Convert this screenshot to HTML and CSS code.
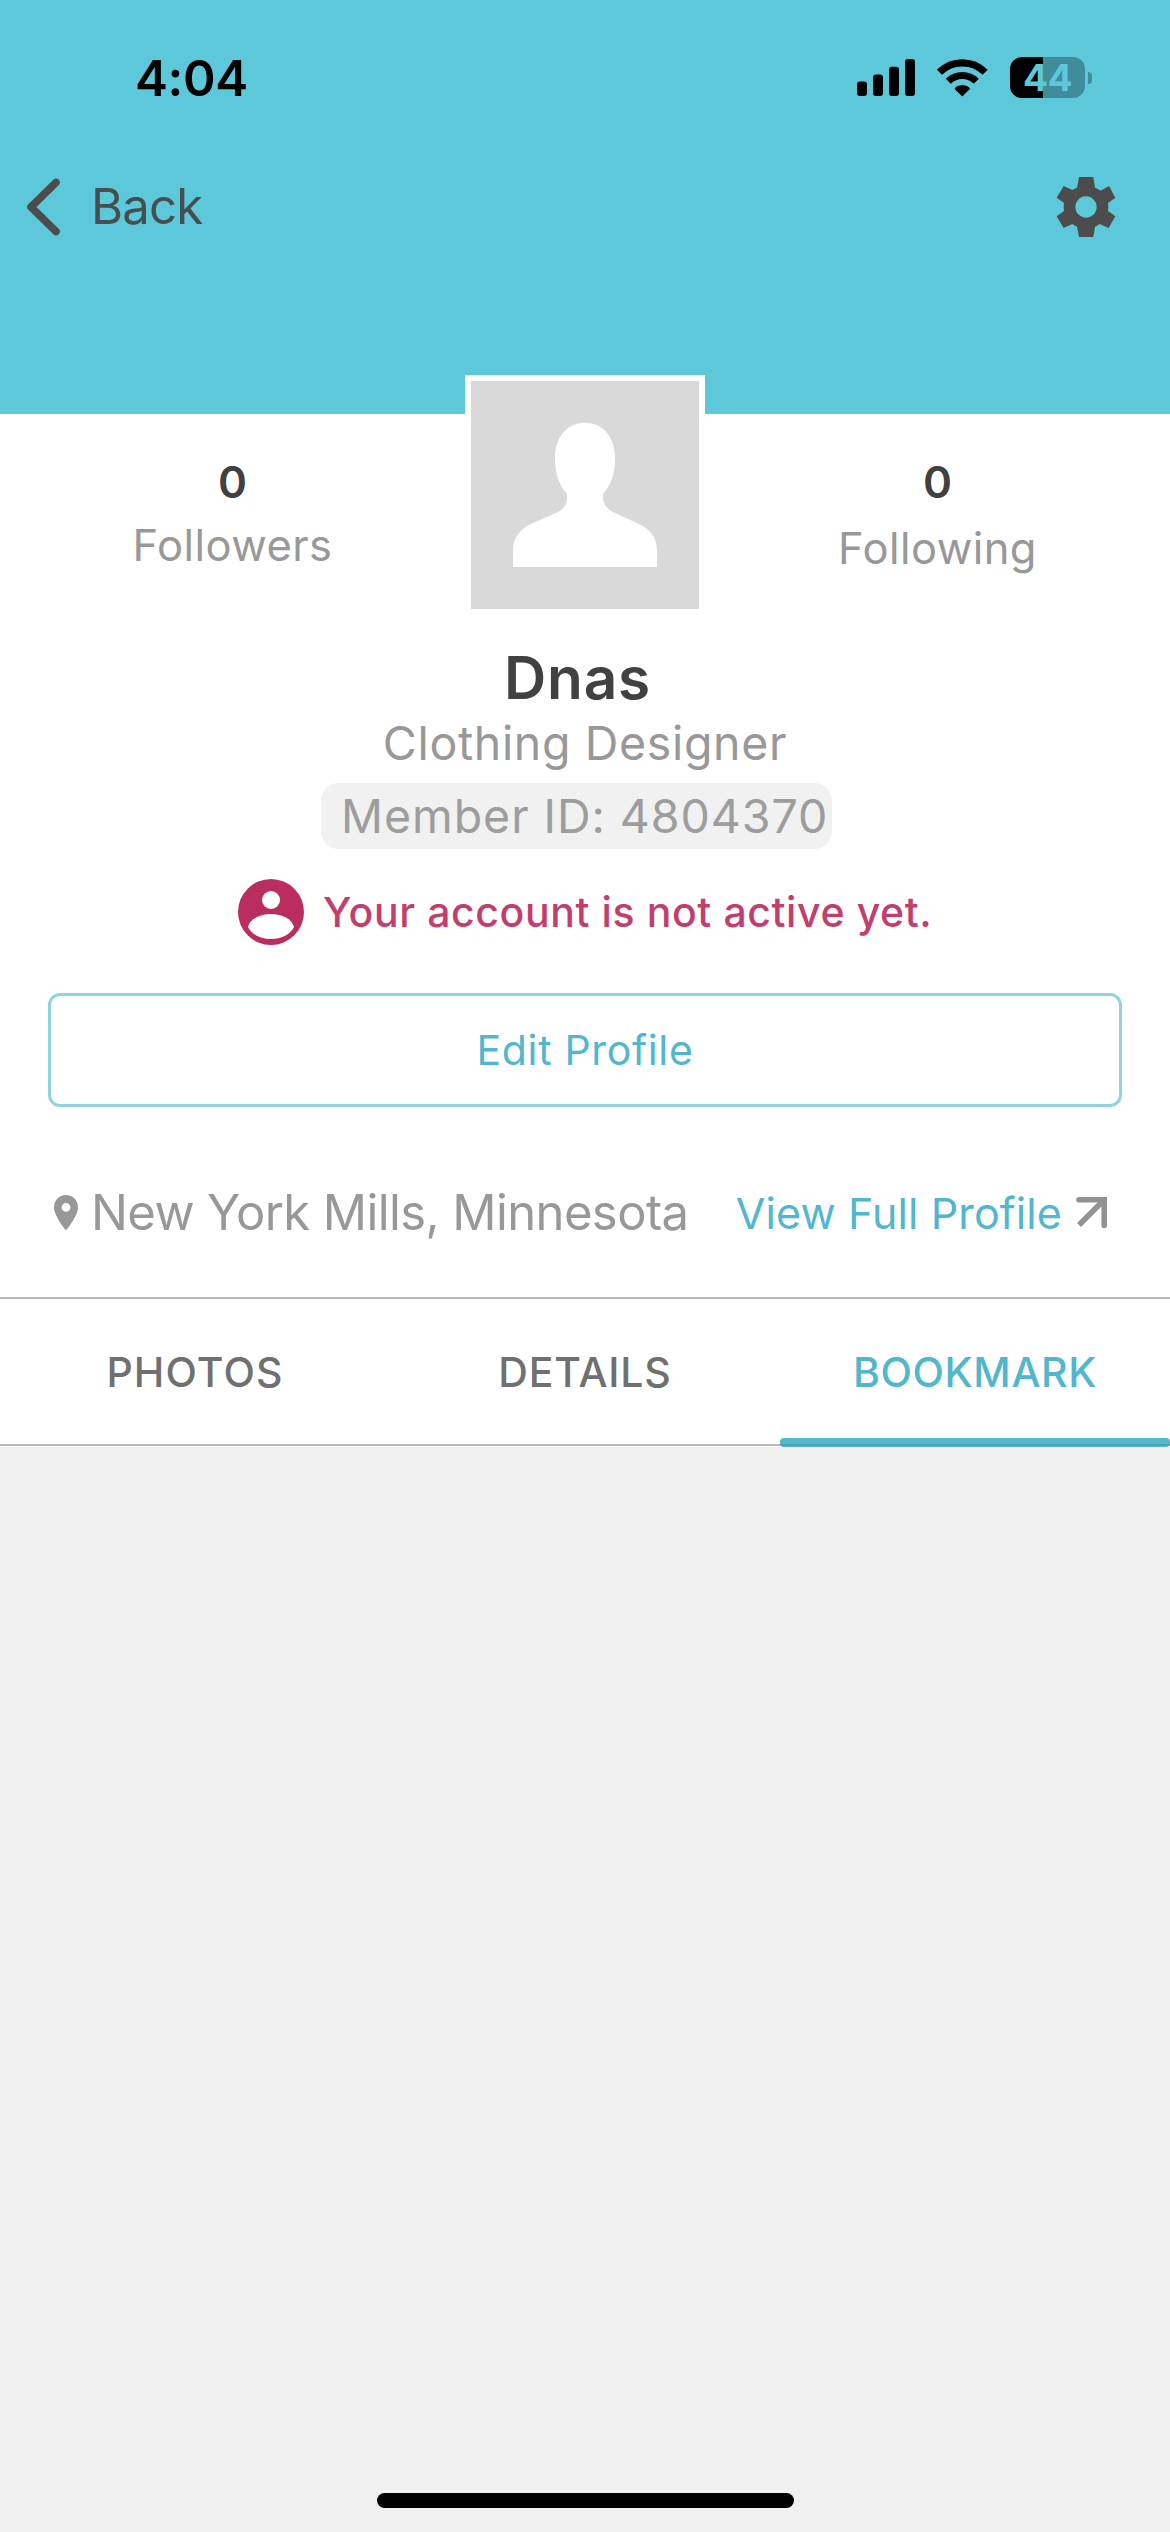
FILE: index.html
```html
<!DOCTYPE html>
<html lang="en">
<head>
<meta charset="utf-8">
<title>Profile</title>
<link rel="stylesheet" href="styles.css">
</head>
<body>
<div class="screen">
  <header class="header">
    <div class="status">
      <span class="time">4:04</span>
      <div class="status-icons">
        <svg class="signal" width="58" height="37" viewBox="0 0 58 37"><rect y="22.5" width="10" height="14.5" rx="3"/><rect x="16" y="15.5" width="10" height="21.5" rx="3"/><rect x="32" y="7.8" width="10" height="29.2" rx="3"/><rect x="48" width="10" height="37" rx="3"/></svg>
        <svg class="wifi" width="51" height="38" viewBox="0 0 51 38"><path d="M2.5 13.2A32.3 32.3 0 0 1 48.1 13.2M11.3 22.3A19.8 19.8 0 0 1 39.3 22.3" fill="none" stroke="#000" stroke-width="7.2"/><path d="M18 30.2Q17.4 29.4 18.2 28.7C22 25.2 28.6 25.2 32.4 28.7Q33.2 29.4 32.6 30.2L25.8 37Q25.3 37.4 24.8 37Z"/></svg>
        <div class="battery"><span class="level">44</span></div>
        <span class="battery-tip"></span>
      </div>
    </div>
    <nav class="nav">
      <a class="back">
        <svg width="36" height="58" viewBox="0 0 36 58"><path d="M30 4.5L5 29L30 53.5" fill="none" stroke="#4d4c4d" stroke-width="7.6" stroke-linecap="round" stroke-linejoin="round"/></svg>
        <span class="back-label">Back</span>
      </a>
      <svg width="60" height="60" viewBox="708 438 180 180"><path fill="#4d4c4d" fill-rule="evenodd" d="M777 438H820L825 470Q834 473 842 479L867 465L886 500L864 516Q866 528 864 540L886 556L866 591L839 579Q832 584 825 587L820 618H777L771 587Q764 584 757 579L731 591L710 556L732 540Q730 528 732 516L710 500L731 465L757 477Q764 473 771 470ZM798 496A32 32 0 1 0 798 560A32 32 0 1 0 798 496Z"/></svg>
    </nav>
  </header>

  <main class="profile">
    <section class="stats">
      <div class="stat">
        <span class="count">0</span>
        <span class="stat-label">Followers</span>
      </div>
      <div class="avatar">
        <svg width="228" height="228" viewBox="0 0 228 228"><path fill="#fff" d="M114 41.7C132 41.7 144 56 144 77C144 93 140 104 132 113V117C132 123 136 128 142 131L168 143C179 148 186 157 186 169V186H42V169C42 157 49 148 60 143L87 131C93 128 96 123 96 117V113C88 104 84 93 84 77C84 56 96 41.7 114 41.7Z"/></svg>
      </div>
      <div class="stat">
        <span class="count">0</span>
        <span class="stat-label following">Following</span>
      </div>
    </section>

    <h1 class="name">Dnas</h1>
    <p class="role">Clothing Designer</p>
    <p class="member">Member ID: 4804370</p>

    <div class="notice">
      <svg width="66" height="66" viewBox="0 0 66 66"><circle cx="33" cy="33" r="33" fill="#b92e5e"/><circle cx="33" cy="21" r="9" fill="#fff"/><path fill="#fff" d="M10 48C12 40 22 35 33 35S54 40 56 48C52 56 43 60 33 60S14 56 10 48Z"/></svg>
      <span class="notice-text">Your account is not active yet.</span>
    </div>

    <a class="edit">Edit Profile</a>

    <section class="info">
      <svg width="24" height="36" viewBox="0 0 24 36"><path fill="#989898" fill-rule="evenodd" d="M12 0C5.3 0 0 5.2 0 12.5C0 21 12 35.5 12 35.5S24 21 24 12.5C24 5.2 18.7 0 12 0ZM12 8A4.4 4.4 0 1 1 12 16.8A4.4 4.4 0 1 1 12 8Z"/></svg>
      <span class="location">New York Mills, Minnesota</span>
      <a class="full">View Full Profile
        <svg width="32" height="32" viewBox="0 0 32 32"><path d="M3 2.8H28.2V28.5" fill="none" stroke="#929292" stroke-width="5.6" stroke-linecap="round"/><path d="M28.2 2.8L3 28" fill="none" stroke="#929292" stroke-width="5.6"/></svg>
      </a>
    </section>
  </main>

  <nav class="tabs">
    <a class="tab photos">PHOTOS</a>
    <a class="tab details">DETAILS</a>
    <a class="tab active">BOOKMARK</a>
  </nav>

  <footer class="home"><span class="home-bar"></span></footer>
</div>
</body>
</html>
```
FILE: styles.css
```css
* { box-sizing: border-box; }

body {
  margin: 0;
  font-family: Inter, "Liberation Sans", sans-serif;
  background: #f0f0f0;
}

svg { display: block; flex: none; }

.screen {
  display: flex;
  flex-direction: column;
  width: 1170px;
  height: 2532px;
  white-space: nowrap;
}

.header { height: 414px; background: #5cc8da; }

.status {
  display: flex;
  align-items: center;
  justify-content: space-between;
  height: 155px;
  padding: 0 78px 0 135px;
}
.time { font-size: 49.5px; font-weight: 600; letter-spacing: -0.4px; color: #000; }
.status-icons { display: flex; align-items: center; }
.wifi { margin: 0 22px; }
.battery {
  display: flex;
  align-items: center;
  justify-content: center;
  width: 75px;
  height: 41px;
  border-radius: 12px;
  background: linear-gradient(90deg, #000 33px, #408c9a 33px);
}
.level { font-size: 37px; line-height: 41px; font-weight: 700; letter-spacing: -0.5px; color: #5cc8da; }
.battery-tip {
  width: 4px;
  height: 12px;
  margin-left: 3px;
  border-radius: 0 4px 4px 0;
  background: #408c9a;
}

.nav {
  display: flex;
  align-items: center;
  justify-content: space-between;
  height: 103px;
  padding: 0 54px 0 26px;
}
.back { display: flex; align-items: center; gap: 29px; }
.back-label { font-size: 49px; letter-spacing: -0.8px; color: #464e50; }

.profile { height: 883px; background: #fff; }

.stats { display: grid; grid-template-columns: 465px 240px 465px; height: 201px; }
.stat { display: flex; flex-direction: column; align-items: center; padding-top: 38px; }
.count { font-size: 44px; line-height: 60px; font-weight: 600; color: #414141; }
.stat-label {
  margin-top: 3px;
  font-size: 43.5px;
  line-height: 60px;
  letter-spacing: 0.45px;
  color: #989898;
}
.following { margin-top: 6px; }
.avatar { height: 240px; margin-top: -39px; border: 6px solid #fff; background: #d9d9d9; }

.name {
  margin: 25px 0 0;
  padding-right: 15px;
  font-size: 58.5px;
  line-height: 76px;
  font-weight: 600;
  letter-spacing: 0.8px;
  text-align: center;
  color: #414141;
}
.role {
  margin: 0;
  font-size: 46.5px;
  line-height: 54px;
  letter-spacing: 0.65px;
  text-align: center;
  color: #989898;
}
.member {
  width: 511px;
  height: 66px;
  margin: 13px 0 0 321px;
  padding-left: 20px;
  border-radius: 18px;
  background: #f1f1f1;
  font-size: 46.5px;
  line-height: 66px;
  letter-spacing: 0.94px;
  color: #9d9d9d;
}

.notice { display: flex; align-items: center; gap: 19px; height: 66px; margin: 30px 0 0 238px; }
.notice-text { font-size: 41px; font-weight: 500; letter-spacing: 0.6px; color: #c23e6c; }

.edit {
  display: block;
  height: 114px;
  margin: 48px 48px 0;
  border: 3px solid #90d4df;
  border-radius: 12px;
  font-size: 41px;
  line-height: 108px;
  letter-spacing: 0.66px;
  text-align: center;
  color: #52b6ce;
}

.info { display: flex; align-items: center; height: 190px; padding: 21px 62px 0 54px; }
.location { margin-left: 13px; font-size: 49px; letter-spacing: -0.6px; color: #989898; }
.full {
  display: flex;
  align-items: center;
  gap: 14px;
  margin-left: auto;
  font-size: 43px;
  letter-spacing: 0.1px;
  color: #52b6ce;
}

.tabs {
  display: grid;
  grid-template-columns: repeat(3, 390px);
  height: 149px;
  border-top: 2px solid #b9b9b9;
  border-bottom: 2px solid #b9b9b9;
  background: #fff;
  box-shadow: 0 1px #fff;
}
.tab {
  position: relative;
  height: 145px;
  font-size: 41px;
  line-height: 146px;
  font-weight: 500;
  letter-spacing: 0.6px;
  text-align: center;
  color: #707070;
}
.photos { letter-spacing: 1.1px; }
.details { letter-spacing: 0.85px; }
.active { color: #52b6ce; }
.active::after {
  content: "";
  position: absolute;
  left: 0;
  right: 0;
  bottom: -3px;
  height: 9px;
  border-radius: 4px;
  background: linear-gradient(#52b8cf 6px, #559eb0 6px, #559eb0 8px, #52b8cf 8px);
}

.home { display: flex; justify-content: center; margin-top: auto; padding-bottom: 24px; }
.home-bar { width: 417px; height: 15px; border-radius: 8px; background: #000; }
```
